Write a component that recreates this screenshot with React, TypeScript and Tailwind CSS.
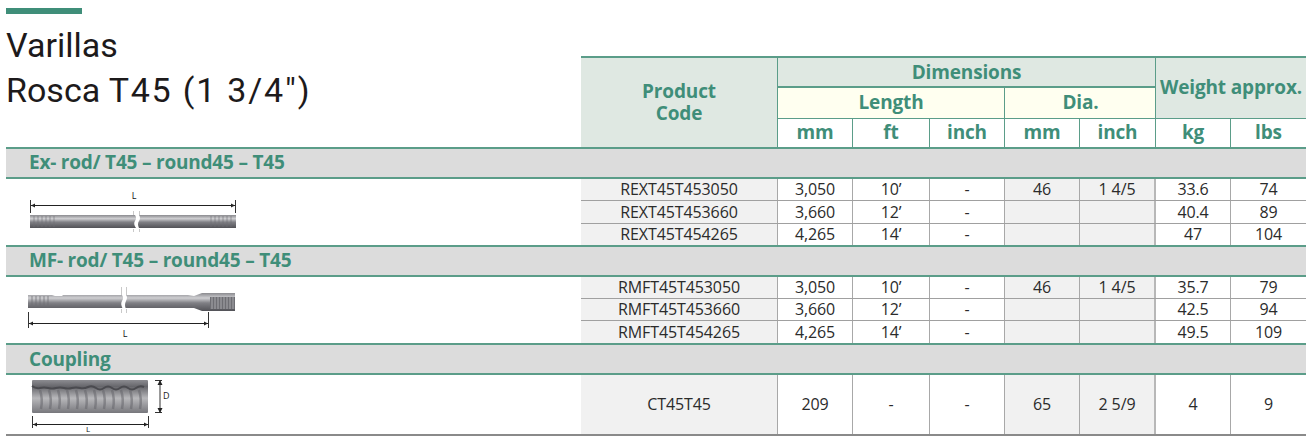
const SANS = "font-['Open_Sans',sans-serif]"

type RowData = [string, string, string, string, string, string, string, string]

const columns = "grid grid-cols-[197px_75px_77px_75px_75px_76px_75px_75px]"

function Cell({ children, index }: { children?: React.ReactNode; index: number }) {
  const shaded = index === 0 || index === 4 || index === 5
  let line = "border-r border-[#a8a8a8]"
  if (index === 5) line = "border-r-2 border-[#b8b8b8]"
  if (index === 7) line = ""
  return (
    <div
      className={`flex items-center justify-center pb-[1px] text-[16px] leading-none tracking-[-0.1px] text-[#2b2b2b] ${line} ${
        shaded ? "bg-[#f1f1f1]" : "bg-white"
      }`}
    >
      {children}
    </div>
  )
}

function DataRow({ row, className }: { row: RowData; className: string }) {
  return (
    <div className={`${columns} ${className}`}>
      {row.map((value, i) => (
        <Cell key={i} index={i}>
          {value}
        </Cell>
      ))}
    </div>
  )
}

function SectionBar({ title, className }: { title: string; className: string }) {
  return (
    <div
      className={`flex items-center border-y-2 border-[#5b9d89] bg-[#dcdcdc] pl-[23px] text-[19px] font-bold tracking-[-0.2px] text-[#3f8e79] ${className}`}
    >
      {title}
    </div>
  )
}

function Group({ image, children }: { image: React.ReactNode; children: React.ReactNode }) {
  return (
    <div className="flex">
      <div className="w-[575px] shrink-0">{image}</div>
      <div className="flex-1">{children}</div>
    </div>
  )
}

function RodGradient({ id }: { id: string }) {
  return (
    <defs>
      <linearGradient id={id} x1="0" y1="0" x2="0" y2="1">
        <stop offset="0" stopColor="#8a8a8e" />
        <stop offset="0.28" stopColor="#cfcfd2" />
        <stop offset="0.55" stopColor="#808085" />
        <stop offset="1" stopColor="#525257" />
      </linearGradient>
    </defs>
  )
}

function ExRod() {
  return (
    <svg width="260" height="66" viewBox="0 0 260 66">
      <RodGradient id="ex" />
      <text x="128" y="20" fontSize="9" fontFamily="Open Sans" fill="#111" textAnchor="middle">L</text>
      <path d="M24.5 21V34M229.5 21V34" stroke="#333" strokeWidth="1" />
      <path d="M25 26.5H229" stroke="#222" strokeWidth="1" />
      <path d="M25 26.5l4-2v4zM229 26.5l-4-2v4z" fill="#222" />
      <g style={{ filter: "blur(0.35px)" }}>
        <path d="M24 36h27l5 0h141l5 0h28v13h-28l-5 0H56l-5 0H24z" fill="url(#ex)" />
        <path d="M28 37v11M32 37v11M36 37v11M40 37v11M44 37v11M48 37v11M205 37v11M209 37v11M213 37v11M217 37v11M221 37v11M225 37v11" stroke="#6f6f74" strokeWidth="1" opacity="0.6" />
        <path d="M129 36q2 3 0 6t1 7h3q-2-4 0-7t0-6z" fill="#fff" />
      </g>
      <path d="M127.5 32v4M133.5 32v4M127.5 50v3M133.5 50v3" stroke="#bbb" strokeWidth="0.8" />
    </svg>
  )
}

function MfRod() {
  return (
    <svg width="260" height="66" viewBox="0 0 260 66">
      <RodGradient id="mf" />
      <g style={{ filter: "blur(0.35px)" }}>
        <path d="M22 18h24l3 1h7l1-1h125l6 1 8-3h33v18h-33l-8-3H57l-1 0h-7l-3 0-24 0z" fill="url(#mf)" />
        <path d="M26 19v11M30 19v11M34 19v11M38 19v11M42 19v11" stroke="#6f6f74" strokeWidth="1.2" opacity="0.6" />
        <rect x="204" y="20" width="25" height="12" fill="#6e6e73" />
        <path d="M206 20v12M209 20v12M212 20v12M215 20v12M218 20v12M221 20v12M224 20v12M227 20v12" stroke="#b8b8bb" strokeWidth="1" opacity="0.8" />
        <path d="M116 18q2 3 0 6t1 8h3q-2-4 0-8t0-6z" fill="#fff" />
      </g>
      <path d="M115.5 10v8M120.5 10v8M115.5 32v4M120.5 32v4" stroke="#bbb" strokeWidth="0.8" />
      <path d="M22.5 35V51M202.5 35V51" stroke="#333" strokeWidth="1" />
      <path d="M23 46.5H202" stroke="#222" strokeWidth="1" />
      <path d="M23 46.5l4-2v4zM202 46.5l-4-2v4z" fill="#222" />
      <text x="119" y="60" fontSize="9" fontFamily="Open Sans" fill="#111" textAnchor="middle">L</text>
    </svg>
  )
}

function CouplingImage() {
  return (
    <svg width="260" height="59" viewBox="0 0 260 59">
      <defs>
        <linearGradient id="cp" x1="0" y1="0" x2="0" y2="1">
          <stop offset="0" stopColor="#8c8c91" />
          <stop offset="0.2" stopColor="#66666b" />
          <stop offset="0.55" stopColor="#b8b8bb" />
          <stop offset="1" stopColor="#77777c" />
        </linearGradient>
      </defs>
      <g style={{ filter: "blur(0.35px)" }}>
        <rect x="26" y="5" width="116" height="33" rx="1" fill="url(#cp)" />
        <path d="M26 11q4 3 8 2t8 0t8 0t8 0t8 0t8 0t8-1t8 1t8 0t8 0t8 0t8 0t8 0t8-1" fill="none" stroke="#4a4a4f" strokeWidth="2" />
        <path d="M34 15q3 9 1 19M43 15q3 9 1 19M52 15q3 9 1 19M61 15q3 9 1 19M70 15q3 9 1 19M79 15q3 9 1 19M88 15q3 9 1 19M97 15q3 9 1 19M106 15q3 9 1 19M115 15q3 9 1 19M124 15q3 9 1 19M133 15q3 9 1 19" stroke="#66666b" strokeWidth="2.5" fill="none" opacity="0.55" />
      </g>
      <path d="M154 6V37M149 5.5h7M149 37.5h7" stroke="#333" strokeWidth="1" />
      <path d="M154 5l-2.5 5h5zM154 38l-2.5-5h5z" fill="#222" />
      <text x="157" y="24" fontSize="9" fontFamily="Open Sans" fill="#222">D</text>
      <path d="M26.5 41V53M142.5 41V53" stroke="#333" strokeWidth="1" />
      <path d="M27 49.5H142" stroke="#222" strokeWidth="1" />
      <path d="M27 49.5l4-2v4zM142 49.5l-4-2v4z" fill="#222" />
      <text x="80" y="56.5" fontSize="8" fontFamily="Open Sans" fill="#111">L</text>
    </svg>
  )
}

const rods: RowData[] = [
  ["REXT45T453050", "3,050", "10’", "-", "46", "1 4/5", "33.6", "74"],
  ["REXT45T453660", "3,660", "12’", "-", "", "", "40.4", "89"],
  ["REXT45T454265", "4,265", "14’", "-", "", "", "47", "104"],
]

const mfRods: RowData[] = [
  ["RMFT45T453050", "3,050", "10’", "-", "46", "1 4/5", "35.7", "79"],
  ["RMFT45T453660", "3,660", "12’", "-", "", "", "42.5", "94"],
  ["RMFT45T454265", "4,265", "14’", "-", "", "", "49.5", "109"],
]

const headText = "font-bold text-[19px] tracking-[-0.15px] text-[#3f8e79]"

function Unit({ label, last }: { label: string; last?: boolean }) {
  return (
    <div className={`flex items-center justify-center bg-white pb-[1px] leading-none ${headText} ${last ? "" : "border-r border-[#5b9d89]"}`}>
      {label}
    </div>
  )
}

function TableHead() {
  return (
    <div className="mt-[42px] w-[725px] border-t-2 border-[#5b9d89] bg-[#dfe8e2]">
      <div className="grid h-[89px] grid-cols-[197px_378px_150px] grid-rows-[30px_30px_29px]">
        <div className={`row-span-3 flex items-center justify-center border-r border-[#5b9d89] pb-[2px] text-center leading-[22px] ${headText}`}>
          Product
          <br />
          Code
        </div>
        <div className={`flex items-center justify-center border-b-2 border-r border-[#5b9d89] leading-none ${headText}`}>Dimensions</div>
        <div className={`row-span-2 flex items-center justify-center whitespace-nowrap pb-[2px] leading-none ${headText}`}>Weight approx.</div>
        <div className="grid grid-cols-[227px_151px] border-r border-[#5b9d89] bg-[#fffff0]">
          <div className={`flex items-center justify-center border-r border-[#5b9d89] pb-[2px] leading-none ${headText}`}>Length</div>
          <div className={`flex items-center justify-center pb-[2px] leading-none ${headText}`}>Dia.</div>
        </div>
        <div className="col-span-2 grid grid-cols-[75px_77px_75px_75px_76px_75px_75px] border-t border-[#5b9d89] bg-white">
          <Unit label="mm" />
          <Unit label="ft" />
          <Unit label="inch" />
          <Unit label="mm" />
          <Unit label="inch" />
          <Unit label="kg" />
          <Unit label="lbs" last />
        </div>
      </div>
    </div>
  )
}

export default function App() {
  return (
    <div className={`h-[441px] w-[1313px] overflow-hidden bg-white pl-[6px] pr-[7px] pt-[8px] ${SANS}`}>
      <div className="h-[6px] w-[76px] bg-[#3f8e79]" />
      <div className="flex">
        <div className="w-[575px] shrink-0 pt-[9px] font-['Roboto',sans-serif] text-[34px] font-normal leading-[45px] text-[#1d1a1b]">
          Varillas
          <br />
          Rosca <span className="tracking-[1.8px]">T45 (1 3/4")</span>
        </div>
        <TableHead />
      </div>

      <SectionBar title="Ex- rod/ T45 – round45 – T45" className="h-[32px] pb-[2px]" />
      <Group image={<ExRod />}>
        <DataRow row={rods[0]} className="h-[22px] border-b border-[#a0a0a0]" />
        <DataRow row={rods[1]} className="h-[23px] border-b border-[#a0a0a0]" />
        <DataRow row={rods[2]} className="h-[21px]" />
      </Group>

      <SectionBar title="MF- rod/ T45 – round45 – T45" className="h-[32px] pb-[2px]" />
      <Group image={<MfRod />}>
        {mfRods.map((row, i) => (
          <DataRow key={row[0]} row={row} className={`h-[22px] ${i < 2 ? "border-b border-[#a0a0a0]" : ""}`} />
        ))}
      </Group>

      <SectionBar title="Coupling" className="h-[32px]" />
      <Group image={<CouplingImage />}>
        <DataRow row={["CT45T45", "209", "-", "-", "65", "2 5/9", "4", "9"]} className="h-[59px]" />
      </Group>
      <div className="h-[2px] bg-[#8a8a8a]" />
    </div>
  )
}
